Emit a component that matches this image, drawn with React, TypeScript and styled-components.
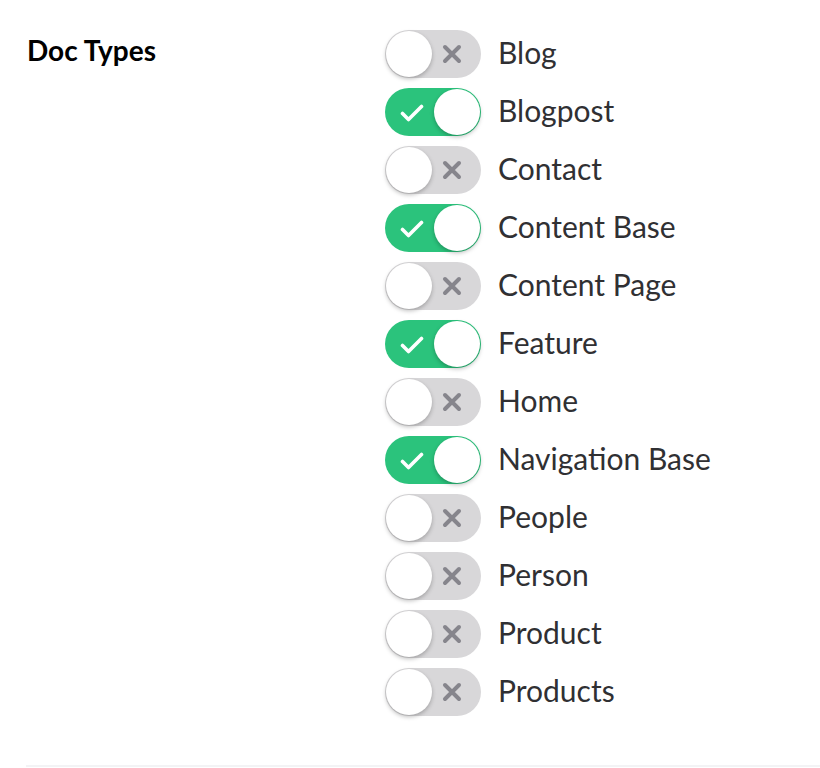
import React from "react";
import styled, { createGlobalStyle } from "styled-components";

const Global = createGlobalStyle`
  html, body { margin: 0; padding: 0; background: #fff; }
  body { font-family: Lato, "Open Sans", sans-serif; color: #303033; }
`;

const Page = styled.div`
  width: 820px;
  height: 768px;
  box-sizing: border-box;
  padding: 30px 0 0 26px;
  display: flex;
  flex-direction: column;
`;

const Section = styled.div`
  display: grid;
  grid-template-columns: 358px 1fr;
  flex: 1;
`;

const Label = styled.div`
  font-weight: 700;
  font-size: 28px;
  color: #000;
  padding-left: 1px;
  line-height: 40px;
`;

const List = styled.div`
  display: flex;
  flex-direction: column;
  gap: 10px;
`;

const Row = styled.div`
  display: flex;
  align-items: center;
  gap: 17px;
  height: 48px;
`;

const Track = styled.div<{ $on: boolean }>`
  position: relative;
  width: 96px;
  height: 48px;
  border-radius: 24px;
  background: ${(p) => (p.$on ? "#2bc37c" : "#d8d7d9")};
  flex-shrink: 0;
  margin-left: 1px;
`;

const Knob = styled.div<{ $on: boolean }>`
  position: absolute;
  top: 1px;
  left: ${(p) => (p.$on ? "49px" : "1px")};
  width: 46px;
  height: 46px;
  border-radius: 50%;
  background: #fff;
  box-shadow: 0 2px 4px rgba(0, 0, 0, 0.25);
`;

const Icon = styled.svg<{ $on: boolean }>`
  position: absolute;
  top: ${(p) => (p.$on ? "16px" : "14px")};
  left: ${(p) => (p.$on ? "15px" : "57px")};
  width: ${(p) => (p.$on ? "24px" : "20px")};
  height: ${(p) => (p.$on ? "18px" : "20px")};
`;

const Name = styled.span`
  font-size: 30px;
  color: #303033;
  line-height: 48px;
  padding-bottom: 4px;
`;

const Divider = styled.div`
  height: 2px;
  background: #f3f3f5;
  margin-bottom: 1px;
`;

const items: [string, boolean][] = [
  ["Blog", false],
  ["Blogpost", true],
  ["Contact", false],
  ["Content Base", true],
  ["Content Page", false],
  ["Feature", true],
  ["Home", false],
  ["Navigation Base", true],
  ["People", false],
  ["Person", false],
  ["Product", false],
  ["Products", false],
];

function Toggle({ on }: { on: boolean }) {
  return (
    <Track $on={on}>
      {on ? (
        <Icon $on={on} viewBox="0 0 24 18">
          <path d="M2.5 9.5 L8.5 15.5 L21.5 2.5" stroke="#fff" strokeWidth="3.6" fill="none" strokeLinecap="round" strokeLinejoin="round" />
        </Icon>
      ) : (
        <Icon $on={on} viewBox="0 0 20 20">
          <path d="M3 3 L17 17 M17 3 L3 17" stroke="#86858c" strokeWidth="4" fill="none" strokeLinecap="round" />
        </Icon>
      )}
      <Knob $on={on} />
    </Track>
  );
}

export default function App() {
  return (
    <>
      <Global />
      <Page>
        <Section>
          <Label>Doc Types</Label>
          <List>
            {items.map(([n, on]) => (
              <Row key={n}>
                <Toggle on={on} />
                <Name>{n}</Name>
              </Row>
            ))}
          </List>
        </Section>
        <Divider />
      </Page>
    </>
  );
}
